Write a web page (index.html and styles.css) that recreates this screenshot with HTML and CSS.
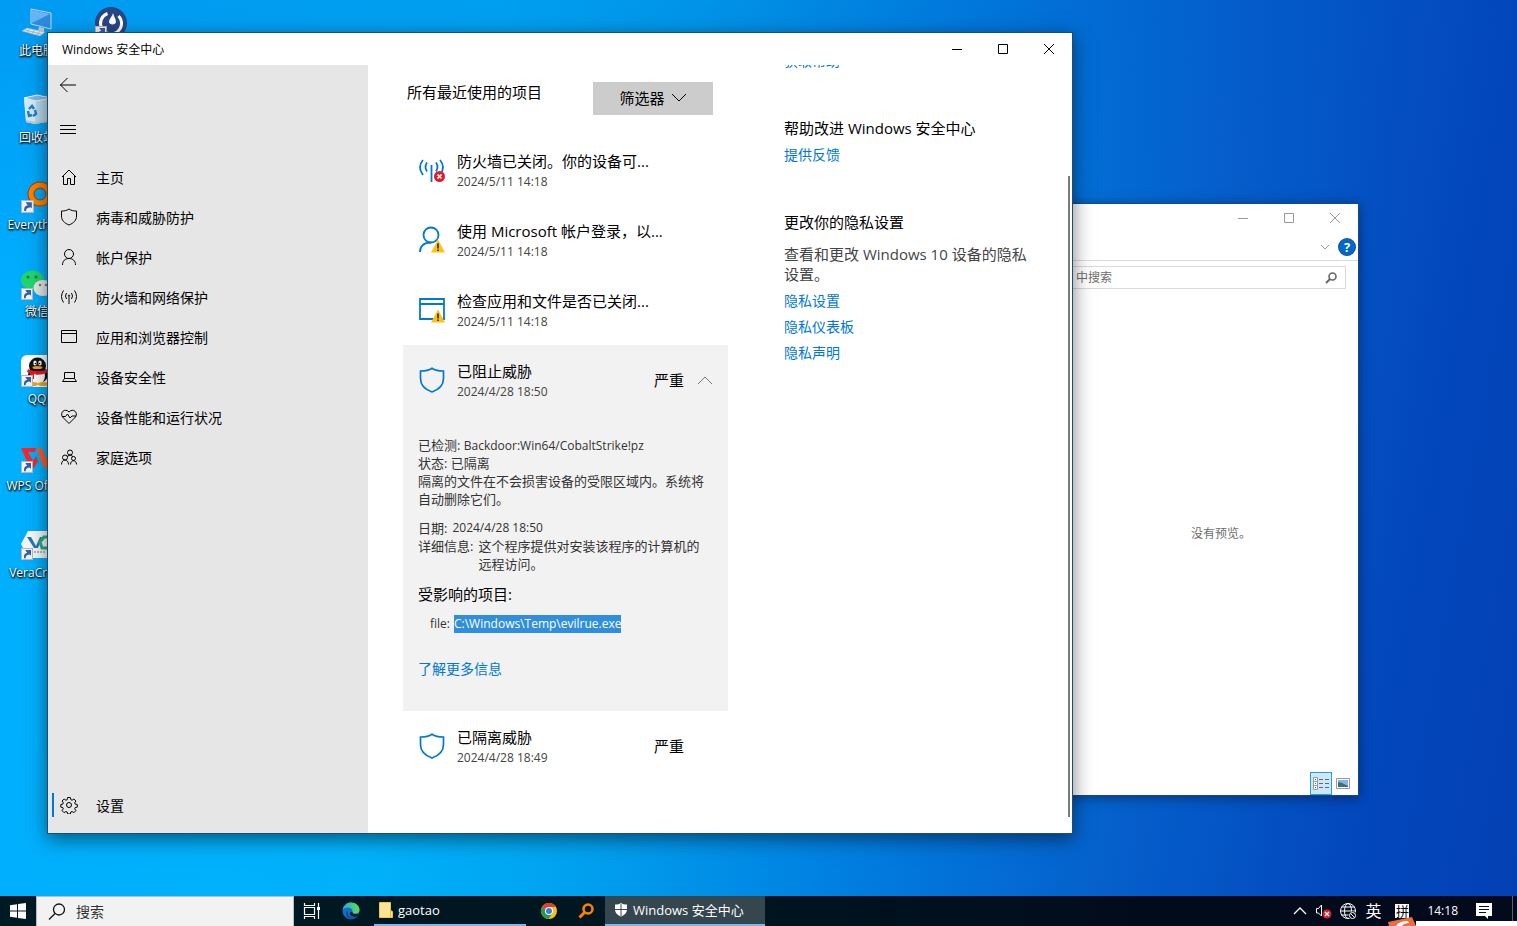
FILE: index.html
```html
<!DOCTYPE html>
<html lang="zh-CN">
<head>
<meta charset="utf-8">
<title>Windows 安全中心</title>
<link rel="stylesheet" href="styles.css">
</head>
<body>
<svg class="defs" width="0" height="0" aria-hidden="true">
  <defs>
    <symbol id="shortcut" viewBox="0 0 12 12"><rect x=".5" y=".5" width="11" height="11" fill="#f4f4f4" stroke="#b8b8b8"/><path d="M3 10.2C2.6 6.6 4 5 6.300 4.800L5 3.200 4.400 2H10v5.700L8.700 6.600C6.500 7 4.500 7.500 4.800 10.200z" fill="#2f62ae"/></symbol>
    <symbol id="shield" viewBox="0 0 26 26"><path d="M13 1.200C10 3.300 6 4 1.500 4v7.500C1.500 17.500 6 22.500 13 25c7-2.500 11.500-7.500 11.500-13.500V4C20 4 16 3.300 13 1.200z" fill="none" stroke="#0078d7" stroke-width="1.700"/></symbol>
    <symbol id="warn" viewBox="0 0 14 14"><path d="M7 .5L14 13.500H0z" fill="#ffc20e"/><path d="M6.200 4.500h1.600v5H6.200zM6.200 10.500h1.600V12H6.200z" fill="#222"/></symbol>
  </defs>
</svg>
<div class="screen">
  <main class="desktop">
    <div class="icons">
      <button class="shortcut"><svg width="32" height="32" viewBox="0 0 32 32"><path d="M10 2l20 4v16L10 17z" fill="#2d8be0" stroke="#bdd7ec"/><path d="M11 3l18 4-18 9z" fill="#63b5f4"/><path d="M18 20l5 1v4l-6-1z" fill="#b8c8d3"/><path d="M6 21l18 4-5 4L1 24z" fill="#e3e6e8" stroke="#9fb0bb" stroke-width=".6"/><path d="M4 23l16 4M9 21.500l-3 4M14 22.500l-3 4M19 24l-3 4" stroke="#93a4ae" stroke-width=".7"/></svg><span>此电脑</span></button>
      <button class="shortcut"><svg width="32" height="32" viewBox="0 0 32 32"><path d="M3 4l13-3 14 3-4 24-12 2-9-2z" fill="#b6d8ec"/><path d="M3 4l12 3-1 23-9-2z" fill="#d5e8f3"/><path d="M3 4l13-3 14 3-15 3z" fill="#80bbdf" stroke="#eaf5fb"/><path d="M8 15l3-3 2 3M7 17l1 5 3-1M14 16l1 4-3 2" fill="none" stroke="#1680d5" stroke-width="2.400"/><path d="M5 26l9 2 12-2v2l-12 2-9-2z" fill="#c7c7c7"/></svg><span>回收站</span></button>
      <button class="shortcut"><svg width="32" height="32" viewBox="0 0 32 32"><path d="M13 20L5 29" stroke="#8f4308" stroke-width="7"/><circle cx="19" cy="13" r="9" fill="none" stroke="#8f4308" stroke-width="7"/><circle cx="19" cy="13" r="9" fill="none" stroke="#ff8000" stroke-width="5"/><use href="#shortcut" x="0" y="19" width="13" height="13"/></svg><span>Everything</span></button>
      <button class="shortcut"><svg width="32" height="32" viewBox="0 0 32 32"><ellipse cx="11.500" cy="12" rx="11.500" ry="9.500" fill="#20d66b"/><circle cx="7" cy="9" r="1.500" fill="#09763a"/><circle cx="15" cy="9" r="1.500" fill="#09763a"/><ellipse cx="22" cy="20" rx="9.500" ry="8" fill="#e8e8e8"/><circle cx="19" cy="17" r="1.200" fill="#777"/><circle cx="25" cy="17" r="1.200" fill="#777"/><use href="#shortcut" x="0" y="20" width="12" height="12"/></svg><span>微信</span></button>
      <button class="shortcut"><svg width="32" height="32" viewBox="0 0 32 32"><rect width="32" height="32" rx="6" fill="#fff"/><ellipse cx="17" cy="20" rx="10" ry="8" fill="#111"/><ellipse cx="17" cy="21" rx="7" ry="8" fill="#fff"/><ellipse cx="12" cy="29" rx="5" ry="2" fill="#f6a51b"/><ellipse cx="22" cy="29" rx="5" ry="2" fill="#f6a51b"/><ellipse cx="16.500" cy="11" rx="8.500" ry="8.500" fill="#111"/><ellipse cx="14" cy="8" rx="1.700" ry="2.500" fill="#fff"/><ellipse cx="19" cy="8" rx="1.700" ry="2.500" fill="#fff"/><circle cx="14.500" cy="8.500" r=".8"/><circle cx="18.500" cy="8.500" r=".8"/><ellipse cx="16.500" cy="12.500" rx="5" ry="1.500" fill="#f6a51b"/><path d="M7 14c5 3 14 3 19 0l1 3c-5 3-10 3-14 2v5H9v-6l-3-1z" fill="#e21b27"/><use href="#shortcut" x="0" y="20" width="12" height="12"/></svg><span>QQ</span></button>
      <button class="shortcut"><svg width="32" height="32" viewBox="0 0 32 32"><path d="M0 6h15l-1 4H7l5 9 3-5 2 5-4 7h-4z" fill="#f9262a"/><path d="M16 6h5l4 11 3-11h4l-5 20h-4l-5-12z" fill="#ff5a28"/><use href="#shortcut" x="0" y="19" width="12" height="12"/></svg><span>WPS Office</span></button>
      <button class="shortcut"><svg width="32" height="32" viewBox="0 0 32 32"><path d="M7 2h19l6 13-6 14H7L0 15z" fill="#f6f8f8"/><path d="M6 8h4l5 9 4-9h2l-4 11h-4z" fill="#2676bc"/><path d="M29 8h-6l-4 5 2 6h9" fill="none" stroke="#27ae83" stroke-width="3"/><path d="M13 23h12" stroke="#777" stroke-width="1" stroke-dasharray="2 1"/><use href="#shortcut" x="0" y="19" width="12" height="12"/></svg><span>VeraCrypt</span></button>
      <button class="shortcut" aria-label="应用快捷方式"><svg width="32" height="32" viewBox="0 0 32 32"><circle cx="16" cy="16" r="16" fill="#294786"/><path d="M12.500 6.500a10.500 10.500 0 1 0 11 2.500" fill="none" stroke="#fff" stroke-width="3"/><path d="M18 6c-1 4-4 6-4 9.500a4 4 0 0 0 7 0c0-3.500-2-5.500-3-9.500z" fill="#fff"/><use href="#shortcut" x="0" y="19" width="12" height="12"/></svg></button>
    </div>

    <section class="window explorer" aria-label="文件资源管理器">
      <div class="explorer-title">
        <button aria-label="最小化"><svg width="12" height="12" viewBox="0 0 12 12"><path d="M1 6.500h10"/></svg></button>
        <button aria-label="最大化"><svg width="12" height="12" viewBox="0 0 12 12"><path d="M1.500 1.500h9v9h-9z"/></svg></button>
        <button aria-label="关闭"><svg width="12" height="12" viewBox="0 0 12 12"><path d="M1 1l10 10M11 1L1 11"/></svg></button>
      </div>
      <div class="explorer-ribbon">
        <button aria-label="展开功能区"><svg width="10" height="6" viewBox="0 0 10 6"><path d="M1 1l4 4 4-4"/></svg></button>
        <button class="help" aria-label="帮助">?</button>
      </div>
      <div class="explorer-search">
        <input type="search" placeholder="中搜索" aria-label="搜索文件">
        <svg width="14" height="14" viewBox="0 0 14 14"><circle cx="8.500" cy="5.500" r="3.500" fill="none" stroke="#666" stroke-width="1.600"/><path d="M6 8L2 12" stroke="#666" stroke-width="2"/></svg>
      </div>
      <div class="explorer-preview">没有预览。</div>
      <div class="explorer-status">
        <button class="view active" aria-label="详细信息"><svg width="18" height="16" viewBox="0 0 18 16"><path d="M1.500 1.500h4v12h-4zM1.500 5.500h4M1.500 9.500h4" fill="#fff" stroke="#999"/><path d="M7 3.500h4M13 3.500h4M7 7.500h4M13 7.500h4M7 11.500h4M13 11.500h4" stroke="#667"/><path d="M3 3h1v1H3zM3 7h1v1H3z" fill="#369" stroke="none"/><path d="M3 11h1v1H3z" fill="#b22" stroke="none"/></svg></button>
        <button class="view" aria-label="大缩略图"><svg width="14" height="12" viewBox="0 0 14 12"><path d="M.5.5h13v10H.5z" fill="#fff" stroke="#999"/><g stroke="none"><path d="M2 2h10v7H2z" fill="#80b4ef"/><path d="M2 4l4 1 6 3v1H2z" fill="#3b6f70"/></g></svg></button>
      </div>
    </section>

    <section class="window security" aria-label="Windows 安全中心">
      <header class="titlebar">
        <h1>Windows 安全中心</h1>
        <div class="controls">
          <button aria-label="最小化"><svg width="12" height="12" viewBox="0 0 12 12"><path d="M1 6.500h10"/></svg></button>
          <button aria-label="最大化"><svg width="12" height="12" viewBox="0 0 12 12"><path d="M1.500 1.500h9v9h-9z"/></svg></button>
          <button aria-label="关闭"><svg width="12" height="12" viewBox="0 0 12 12"><path d="M1 1l10 10M11 1L1 11"/></svg></button>
        </div>
      </header>
      <div class="body">
        <nav class="sidebar">
          <button class="back" aria-label="返回"><svg width="18" height="18" viewBox="0 0 18 18"><path d="M1 9h16M8.500 2l-7 7 7 7"/></svg></button>
          <button class="burger" aria-label="菜单"><svg width="18" height="18" viewBox="0 0 18 18"><path d="M1 5.500h16M1 9.500h16M1 13.500h16"/></svg></button>
          <a href="#home"><svg width="18" height="18" viewBox="0 0 18 18"><path d="M2 9l7-7 7 7M3.500 8v8.500h4v-6h3v6h4V8"/></svg>主页</a>
          <a href="#virus"><svg width="18" height="18" viewBox="0 0 18 18"><path d="M9 1C7 2.500 4.500 3 1.500 3v5C1.500 12 4 15 9 17c5-2 7.500-5 7.500-9V3C13.500 3 11 2.500 9 1z"/></svg>病毒和威胁防护</a>
          <a href="#account"><svg width="18" height="18" viewBox="0 0 18 18"><circle cx="9" cy="6" r="4.500"/><path d="M2.500 17c0-4 2.500-6.500 6.500-6.500s6.500 2.500 6.500 6.500"/></svg>帐户保护</a>
          <a href="#firewall"><svg width="18" height="18" viewBox="0 0 18 18"><path d="M9 7.500V16M6.500 5q-2 3 0 6M11.500 5q2 3 0 6M3.500 2.500q-4 6 0 12M14.500 2.500q4 6 0 12"/><circle cx="9" cy="7.500" r=".5"/></svg>防火墙和网络保护</a>
          <a href="#app"><svg width="18" height="18" viewBox="0 0 18 18"><path d="M1.500 2.500h15v12h-15zM1.500 5.500h15"/></svg>应用和浏览器控制</a>
          <a href="#device"><svg width="18" height="18" viewBox="0 0 18 18"><path d="M4.500 4.500h10v6h-10zM4.500 10.500l-2 3h14l-2-3"/></svg>设备安全性</a>
          <a href="#health"><svg width="18" height="18" viewBox="0 0 18 18"><path d="M9 15.500L2.500 9C-.5 4.500 5-.5 9 4c4-4.500 9.500.5 6.500 5zM2 8.500h3.500l2-2.500 2.500 4 2-2h4"/></svg>设备性能和运行状况</a>
          <a href="#family"><svg width="18" height="18" viewBox="0 0 18 18"><circle cx="10" cy="4.500" r="2.500"/><circle cx="5" cy="9.500" r="2.500"/><circle cx="13.500" cy="10.500" r="2"/><path d="M1.500 16.500c0-6 7-6 7 0M10.500 16.500c0-5 6-5 6 0M7 8.500q3-3 6 0"/></svg>家庭选项</a>
          <a class="settings" href="#settings"><svg width="18" height="18" viewBox="0 0 18 18"><circle cx="9" cy="9" r="2.500"/><path d="M7.600 1.500h2.800l.4 2.200 1.300.5 1.800-1.200 2 2-1.200 1.900.5 1.200 2.100.4v2.600l-2.100.5-.5 1.200 1.200 1.900-2 2-1.800-1.200-1.300.5-.4 2H7.600l-.4-2-1.300-.5-1.800 1.200-2-2 1.200-1.900-.5-1.200-2-.5V8.500l2-.4.5-1.200L2.100 5l2-2 1.800 1.200 1.300-.5z"/></svg>设置</a>
        </nav>
        <div class="content">
          <div class="history">
            <div class="history-head"><h2>所有最近使用的项目</h2><button class="filter">筛选器<svg width="16" height="10" viewBox="0 0 16 10"><path d="M1 1l7 7 7-7"/></svg></button></div>
            <article class="item">
              <svg class="item-icon" width="28" height="28" viewBox="0 0 28 28"><path d="M13.500 9v17M9 6.500q-3 4.500 0 9M18 6.500q3 4.500 0 9M5 4q-6 7 0 15M22 4q6 7 0 15" fill="none" stroke="#0078d7" stroke-width="1.800"/><circle cx="21.500" cy="20.500" r="5.500" fill="#dc1f2d"/><path d="M19.500 18.500l4 4M23.500 18.500l-4 4" stroke="#fff" stroke-width="1.600"/></svg>
              <div class="item-text"><h3>防火墙已关闭。你的设备可...</h3><time>2024/5/11 14:18</time></div>
            </article>
            <article class="item">
              <svg class="item-icon" width="28" height="28" viewBox="0 0 28 28"><circle cx="13" cy="9" r="7.500" fill="none" stroke="#0078d7" stroke-width="1.800"/><path d="M2 26c0-6 4-9.500 11-9.500" fill="none" stroke="#0078d7" stroke-width="1.800"/><use href="#warn" x="13" y="13" width="14" height="14"/></svg>
              <div class="item-text"><h3>使用 Microsoft 帐户登录，以...</h3><time>2024/5/11 14:18</time></div>
            </article>
            <article class="item">
              <svg class="item-icon" width="28" height="28" viewBox="0 0 28 28"><path d="M2 3h24v20H2zM2 8h24" fill="none" stroke="#0078d7" stroke-width="1.800"/><use href="#warn" x="13" y="13" width="14" height="14"/></svg>
              <div class="item-text"><h3>检查应用和文件是否已关闭...</h3><time>2024/5/11 14:18</time></div>
            </article>
            <article class="card">
              <div class="item">
                <svg class="item-icon" width="28" height="28" viewBox="0 0 28 28"><use href="#shield" x="1" y="1" width="26" height="26"/></svg>
                <div class="item-text"><h3>已阻止威胁</h3><time>2024/4/28 18:50</time></div>
                <span class="severity">严重</span>
                <button class="collapse" aria-label="收起"><svg width="16" height="10" viewBox="0 0 16 10"><path d="M1 9l7-7 7 7"/></svg></button>
              </div>
              <div class="details">
                <p>已检测: <span class="latin">Backdoor:Win64/CobaltStrike!pz</span></p>
                <p>状态: 已隔离</p>
                <p>隔离的文件在不会损害设备的受限区域内。系统将自动删除它们。</p>
                <dl>
                  <div><dt>日期:</dt><dd class="date">2024/4/28 18:50</dd></div>
                  <div><dt>详细信息:</dt><dd>这个程序提供对安装该程序的计算机的远程访问。</dd></div>
                </dl>
                <h4>受影响的项目:</h4>
                <p class="path">file: <mark>C:\Windows\Temp\evilrue.exe</mark></p>
                <a class="more" href="#more">了解更多信息</a>
              </div>
            </article>
            <article class="item">
              <svg class="item-icon" width="28" height="28" viewBox="0 0 28 28"><use href="#shield" x="1" y="1" width="26" height="26"/></svg>
              <div class="item-text"><h3>已隔离威胁</h3><time>2024/4/28 18:49</time></div>
              <span class="severity">严重</span>
            </article>
          </div>
          <aside class="side">
            <section><a href="#help">获取帮助</a></section>
            <section><h2>帮助改进 Windows 安全中心</h2><a href="#feedback">提供反馈</a></section>
            <section><h2>更改你的隐私设置</h2><p>查看和更改 Windows 10 设备的隐私设置。</p><a href="#privacy">隐私设置</a><a href="#dashboard">隐私仪表板</a><a href="#statement">隐私声明</a></section>
          </aside>
          <div class="scrollbar"></div>
        </div>
      </div>
    </section>
  </main>

  <footer class="taskbar">
    <button class="start" aria-label="开始"><svg width="16" height="16" viewBox="0 0 16 16"><path d="M0 2.200L7 1.200v6.300H0zM8 1.100L16 0v7.500H8zM0 8.500h7v6.300l-7-1zM8 8.500h8V16l-8-1.100z" fill="#fff"/></svg></button>
    <label class="search"><svg width="18" height="18" viewBox="0 0 18 18"><circle cx="11" cy="6.500" r="5.500" fill="none" stroke="#111" stroke-width="1.300"/><path d="M7 10.500l-6 6" stroke="#111" stroke-width="1.300"/></svg><input type="search" placeholder="搜索" aria-label="搜索"></label>
    <button class="task view-btn" aria-label="任务视图"><svg width="18" height="18" viewBox="0 0 18 18"><path d="M1.500 1v2.500h10V1M1.500 17v-2.500h10V17M1.500 5.500h10v7h-10zM15.500 1v16" fill="none" stroke="#fff" stroke-width="1.200"/><path d="M14 5h3v3h-3z" fill="#fff"/></svg></button>
    <button class="task edge" aria-label="Edge"><svg width="18" height="18" viewBox="0 0 18 18"><defs><linearGradient id="eg"><stop stop-color="#25a9e9"/><stop offset="1" stop-color="#66d84e"/></linearGradient></defs><circle cx="9" cy="9" r="8.500" fill="#1270c4"/><path d="M.6 8C1.500 3 5 .5 9 .5c5 0 8.500 3.500 8.500 7 0 3-2 4-4.500 4-2 0-3-.5-2.500-1.500C11 7 8.500 5.500 6 5.500 3.500 5.500 1.500 6.500.6 8z" fill="url(#eg)"/><path d="M6 9c-1 4 3 7.500 8 6-5 4-11 0-10-4 .3-1 1-2 2-2z" fill="#164c98"/><path d="M10.500 10c-.5 1.500 2 3 6.500 1.500l-2 3c-3 1-7-.5-7-3 0-1 1-2 2.500-1.500z" fill="#001a25"/></svg></button>
    <button class="task folder"><svg width="14" height="16" viewBox="0 0 14 16"><path d="M.5.500h11v8l2 1v6h-13z" fill="#ffe593" stroke="#eac550"/><path d="M11.500 9v6" stroke="#e3b737"/></svg>gaotao</button>
    <button class="task chrome" aria-label="Chrome"><svg width="16" height="16" viewBox="0 0 16 16"><circle cx="8" cy="8" r="8" fill="#fbc116"/><path d="M8 8L1 4A8 8 0 0 1 15 4H8z" fill="#e33b2e"/><path d="M8 8L1 4a8 8 0 0 0 6.500 12L11.500 10z" fill="#279a4b"/><circle cx="8" cy="8" r="4" fill="#fff"/><circle cx="8" cy="8" r="3" fill="#347ce9"/></svg></button>
    <button class="task every" aria-label="Everything"><svg width="16" height="16" viewBox="0 0 16 16"><circle cx="10" cy="6" r="4.500" fill="none" stroke="#ff8000" stroke-width="2.600"/><path d="M6.500 9.500L1.500 14.500" stroke="#ff8000" stroke-width="3"/></svg></button>
    <button class="task current"><svg width="12" height="14" viewBox="0 0 12 14"><path d="M6 0C4.500 1.200 2.500 1.500 0 1.500V6c0 4 2.500 6 6 7.500C9.500 12 12 10 12 6V1.500C9.500 1.500 7.500 1.200 6 0z" fill="#fff"/><path d="M6 1v12M0 6.500h12" stroke="#38484f"/></svg>Windows 安全中心</button>
    <div class="tray">
      <button aria-label="显示隐藏的图标"><svg width="14" height="8" viewBox="0 0 14 8"><path d="M1 7l6-6 6 6" fill="none" stroke="#fff" stroke-width="1.300"/></svg></button>
      <button aria-label="音量"><svg width="17" height="16" viewBox="0 0 17 16"><path d="M1.500 5.500h2L6.500 2v11l-3-3h-2z" fill="none" stroke="#fff"/><circle cx="12" cy="11" r="4.500" fill="#d71f2b"/><path d="M10 9l4 4M14 9l-4 4" stroke="#fff" stroke-width="1.300"/></svg></button>
      <button aria-label="网络"><svg width="17" height="17" viewBox="0 0 17 17"><g fill="none" stroke="#fff"><circle cx="8" cy="8" r="7.500"/><ellipse cx="8" cy="8" rx="3.500" ry="7.500"/><path d="M.5 8h15M1.500 4h13M1.500 12h13"/></g><circle cx="12.500" cy="12.500" r="4" fill="#020b18"/><circle cx="12.500" cy="12.500" r="3" fill="none" stroke="#fff"/><path d="M10.500 10.500l4 4" stroke="#fff"/></svg></button>
      <button class="lang">英</button>
      <button class="ime"><span>拼</span></button>
      <time class="clock">14:18</time>
      <button aria-label="通知"><svg width="16" height="16" viewBox="0 0 16 16"><path d="M0 0h16v13h-4v3l-3-3H0z" fill="#fff"/><path d="M3 3.500h10M3 6.500h10M3 9.500h7" stroke="#061020"/></svg></button>
      <span class="peek"></span>
    </div>
    <div class="ime-bar"><svg width="28" height="9" viewBox="0 0 28 9"><path d="M0 5L24 0l4 9H1z" fill="#f26b3a"/><path d="M8 9q3-5 12-5l1 2q-5 0-7 3z" fill="#fff"/></svg><span></span></div>
  </footer>
</div>
</body>
</html>
```
FILE: styles.css
```css
* { box-sizing: border-box; }
body, h1, h2, h3, h4, p, dl, dd { margin: 0; font-weight: 400; }
body { font: 14px/20px "Open Sans", "Noto Sans CJK SC", sans-serif; color: #000; }
button { border: 0; padding: 0; background: none; font: inherit; color: inherit; }
input { border: 0; padding: 0; background: none; font: inherit; min-width: 0; outline: 0; }
a { color: #0078d7; text-decoration: none; }
svg { display: block; flex: none; }
.defs { position: absolute; }

.screen { display: flex; flex-direction: column; height: 100vh; overflow: hidden; }
.desktop {
  flex: 1;
  position: relative;
  overflow: hidden;
  background:
    linear-gradient(to bottom, rgba(0, 70, 190, .18), rgba(0, 70, 190, 0) 35%),
    linear-gradient(100deg, #00aeff 0%, #00b2fa 30%, #00a4f0 42%, #0082e2 58%, #0560cc 75%, #0347bc 90%, #0340b4 100%);
}

.icons { display: grid; grid-auto-flow: column; grid-template-rows: repeat(7, 87px); grid-auto-columns: 74px; justify-content: start; }
.shortcut { display: flex; flex-direction: column; align-items: center; gap: 3px; padding-top: 7px; color: #fff; font-size: 12px; line-height: 18px; white-space: nowrap; text-shadow: 1px 1px 2px #000, 0 1px 2px #000; }

.window { position: absolute; display: flex; flex-direction: column; background: #fff; }
.window button svg { fill: none; stroke: currentColor; }

.explorer { top: 203px; right: 158px; bottom: 100px; width: 400px; border: 1px solid #174a85; box-shadow: 0 2px 12px rgba(0, 0, 0, .4); color: #6d6d6d; font-size: 12px; }
.explorer-title { display: flex; justify-content: flex-end; height: 28px; color: #999; }
.explorer-title button { width: 46px; display: grid; place-items: center; }
.explorer-ribbon { display: flex; justify-content: flex-end; align-items: center; gap: 9px; height: 29px; padding: 2px 3px 0 0; border-bottom: 1px solid #dadbdc; color: #999; }
.explorer-ribbon .help { width: 16px; height: 16px; border-radius: 50%; background: #0068cc; box-shadow: 0 0 0 1px #15548c; color: #fff; font-size: 13px; font-weight: 700; line-height: 16px; }
.explorer-search { display: flex; align-items: center; height: 23px; margin: 5px 12px 0 90px; padding: 0 7px 0 25px; border: 1px solid #d9d9d9; }
.explorer-search input { flex: 1; }
.explorer-search input::placeholder { color: #6d6d6d; opacity: 1; }
.explorer-preview { flex: 1; display: flex; align-items: center; justify-content: flex-end; margin-top: 7px; padding-right: 107px; }
.explorer-status { display: flex; justify-content: flex-end; align-items: center; gap: 4px; padding-right: 8px; }
.view { height: 23px; display: grid; place-items: center; }
.view.active { width: 22px; border: 1px solid #26a0da; background: #cbe8f6; }

.security { top: 32px; left: 47px; right: 444px; bottom: 62px; border: 1px solid #1d4e6e; box-shadow: 0 5px 18px rgba(0, 0, 0, .5); }
.titlebar { display: flex; justify-content: space-between; height: 32px; padding-left: 14px; }
.titlebar h1 { font-size: 12px; line-height: 34px; }
.controls { display: flex; }
.controls button { width: 46px; display: grid; place-items: center; }
.body { flex: 1; display: flex; min-height: 0; }

.sidebar { width: 320px; display: flex; flex-direction: column; padding-bottom: 7px; background: #e6e6e6; }
.sidebar svg { fill: none; stroke: #000; }
.sidebar button { height: 40px; padding-left: 11px; text-align: left; }
.sidebar .burger { height: 48px; margin-bottom: 5px; }
.sidebar a { display: flex; align-items: center; gap: 18px; height: 40px; padding-left: 12px; color: #000; }
.sidebar a svg { margin-bottom: 2px; }
.sidebar .settings { position: relative; margin-top: auto; }
.settings::before { content: ""; position: absolute; left: 4px; top: 7px; width: 2px; height: 24px; background: #0078d7; }

.content { flex: 1; position: relative; display: flex; gap: 56px; padding-left: 35px; overflow: hidden; }
.history { width: 325px; padding-top: 17px; }
.history-head { display: flex; justify-content: space-between; margin: 0 15px 20px 4px; }
.history-head h2 { font-size: 15px; }
.filter { display: flex; align-items: center; justify-content: center; gap: 6px; width: 120px; height: 33px; padding-bottom: 2px; background: #ccc; font-size: 15px; }
.item { display: flex; align-items: center; height: 70px; padding: 0 15px; }
.item-icon { margin-right: 11px; }
.item-text { flex: 1; display: flex; flex-direction: column; gap: 1px; padding-top: 3px; white-space: nowrap; }
.item-text h3 { font-size: 15px; }
.item-text time { color: #444; font-size: 12px; }
.severity { width: 43px; font-size: 15px; }
.item > .severity:last-child { margin-right: 16px; }
.collapse { color: #777; }
.card { background: #f2f2f2; }
.details { padding: 21px 20px 32px 15px; color: #333; font-size: 13px; line-height: 18px; }
.latin { font-size: 12px; line-height: 12px; }
.date, .path { font-size: 12px; }
.details dl { margin: 11px 0; }
.details dl div { display: flex; gap: 5px; }
.details dt { white-space: nowrap; }
.details h4 { color: #000; font-size: 15px; line-height: 20px; }
.path { display: flex; gap: 4px; margin: 11px 0 26px 12px; }
.path mark { background: #308fdd; color: #fff; }
.more { display: block; font-size: 14px; line-height: 20px; }

.side { display: flex; flex-direction: column; gap: 47px; width: 250px; margin-top: -14px; }
.side section { display: flex; flex-direction: column; gap: 6px; }
.side h2, .side p { padding-bottom: 1px; font-size: 15px; }
.side p { margin-top: 5px; color: #444; }
.scrollbar { position: absolute; right: 2px; top: 111px; bottom: 16px; width: 2px; background: #7a7a7a; }

.taskbar { position: relative; display: flex; height: 30px; background: linear-gradient(to right, #001a24, #001520 50%, #020b1c 75%, #020a1c); color: #fff; font-size: 13px; }
.start { width: 36px; display: grid; place-items: center; }
.search { display: flex; align-items: center; gap: 10px; width: 258px; padding-left: 11px; background: #f2f2f2; border: 1px solid #b9bdc0; border-bottom: 0; font-size: 14px; }
.search input { flex: 1; }
.search input::placeholder { color: #333; opacity: 1; }
.task { display: flex; align-items: center; justify-content: center; width: 36px; }
.edge { width: 44px; padding-right: 2px; }
.folder, .current { justify-content: flex-start; border-bottom: 2px solid #76b9ed; }
.folder { width: 152px; gap: 5px; padding-left: 5px; }
.chrome { width: 46px; }
.every { width: 33px; padding-right: 6px; }
.current { width: 160px; gap: 6px; padding-left: 10px; background: #35464e; }
.tray { display: flex; align-items: center; gap: 8px; margin-left: auto; }
.lang { font-size: 16px; }
.ime { padding: 0 3px 0 6px; }
.ime span { display: block; width: 14px; height: 14px; background: #fff; color: #000; font-size: 13px; line-height: 14px; }
.clock { padding: 0 10px 0 7px; font-size: 12px; }
.peek { width: 5px; height: 30px; margin-left: 12px; border-left: 1px solid #58616c; }
.ime-bar { position: absolute; right: 0; bottom: 0; display: flex; align-items: flex-end; }
.ime-bar span { width: 101px; height: 5px; background: #fff; }
```
